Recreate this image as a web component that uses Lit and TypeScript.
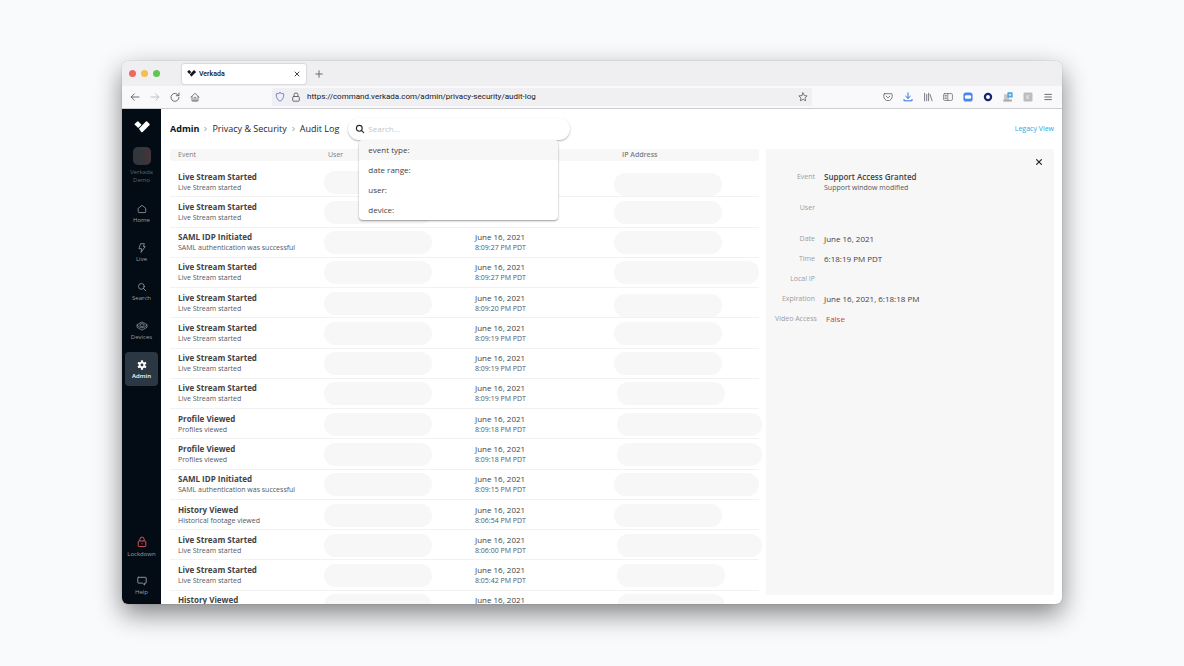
import { LitElement, html, css, svg, nothing } from "lit";
import { customElement, state } from "lit/decorators.js";
import { classMap } from "lit/directives/class-map.js";

interface AuditEvent {
  title: string;
  detail: string;
  time: string;
  wide?: boolean;
  low?: boolean;
  inset?: boolean;
}

const STREAM = { title: "Live Stream Started", detail: "Live Stream started" };
const PROFILE = { title: "Profile Viewed", detail: "Profiles viewed" };
const SAML = { title: "SAML IDP Initiated", detail: "SAML authentication was successful" };
const HISTORY = { title: "History Viewed", detail: "Historical footage viewed" };

const EVENTS: AuditEvent[] = [
  { ...STREAM, time: "8:09:31 PM PDT", low: true },
  { ...STREAM, time: "8:09:28 PM PDT" },
  { ...SAML, time: "8:09:27 PM PDT" },
  { ...STREAM, time: "8:09:27 PM PDT", wide: true },
  { ...STREAM, time: "8:09:20 PM PDT", low: true },
  { ...STREAM, time: "8:09:19 PM PDT" },
  { ...STREAM, time: "8:09:19 PM PDT" },
  { ...STREAM, time: "8:09:19 PM PDT", inset: true },
  { ...PROFILE, time: "8:09:18 PM PDT", wide: true, inset: true },
  { ...PROFILE, time: "8:09:18 PM PDT", wide: true, inset: true },
  { ...SAML, time: "8:09:15 PM PDT", wide: true },
  { ...HISTORY, time: "8:06:54 PM PDT" },
  { ...STREAM, time: "8:06:00 PM PDT", wide: true, inset: true },
  { ...STREAM, time: "8:05:42 PM PDT", inset: true },
  { ...HISTORY, time: "8:05:40 PM PDT", inset: true },
];

const line = (body: unknown, size = 10, width = 1) => html`<svg
  width=${size} height=${size} viewBox="0 0 10 10" fill="none" stroke="currentColor"
  stroke-width=${width} stroke-linecap="round" stroke-linejoin="round" aria-hidden="true">${body}</svg>`;

const icons = {
  back: line(svg`<path d="M9 5H1.2M4.4 1.8L1.2 5l3.2 3.2"/>`, 10, 0.9),
  forward: line(svg`<path d="M1 5h7.8M5.6 1.8L8.8 5 5.6 8.2"/>`, 10, 0.9),
  reload: line(svg`<path d="M8.5 3.4A4 4 0 1 0 9 5.3M9 1v2.7H6.3"/>`, 10, 0.9),
  home: line(svg`<path d="M1 5.2L5 1.2l4 4M2 4.4V9h6V4.4M4 9V6.2a1 1 0 0 1 2 0V9"/>`, 10, 0.8),
  shield: line(svg`<path d="M5 .8c1.2.7 2.5 1 3.8 1C8.8 5.6 7.6 8 5 9.3 2.4 8 1.2 5.6 1.2 1.8c1.3 0 2.6-.3 3.8-1z"/>`, 10, 0.9),
  lock: line(svg`<rect x="1.7" y="4.5" width="6.6" height="4.7" rx=".9"/><path d="M3 4.4V2.900a2 2 0 0 1 4 0v1.500"/>`, 10, 0.9),
  star: line(svg`<path d="M5 .9l1.250 2.650 2.900.350-2.150 2 .6 2.900L5 7.350 2.400 8.800l.6-2.900-2.150-2 2.900-.350z"/>`, 10, 0.8),
  pocket: line(svg`<path d="M1.7 1.7h6.600a.9.9 0 0 1 .9.9v1.800a4.200 4.200 0 0 1-8.400 0V2.600a.9.9 0 0 1 .9-.9z"/><path d="M3.200 4.200L5 5.900l1.800-1.700"/>`, 10, 0.8),
  download: line(svg`<path d="M5 .8v5.400M2.700 4.200L5 6.400l2.300-2.200M1 7.400v1.400h8V7.400"/>`, 10, 1),
  library: line(svg`<path d="M1.600 1.200v7.600M3.700 2.400v6.400M5.600 1.200v7.600M7 2.400l2.100 6.400"/>`, 10, 0.8),
  panes: line(svg`<rect x=".6" y="1.600" width="8.800" height="6.800" rx="1"/><path d="M4.800 1.600v6.800M2 3.500h1.400M2 5h1.400M2 6.500h1.400"/>`, 10, 0.7),
  zoom: html`<svg width="10" height="10" viewBox="0 0 10 10" aria-hidden="true"><rect x=".4" y=".4" width="9.200" height="9.200" rx="2.600" fill="#4a86ee"/><rect x="1.900" y="3.200" width="6.200" height="3.600" rx="1.400" fill="#fff"/></svg>`,
  ring: html`<svg width="10" height="10" viewBox="0 0 10 10" aria-hidden="true"><circle cx="5" cy="5" r="3.100" fill="#fff" stroke="#14256b" stroke-width="2.200"/></svg>`,
  note: html`<svg width="10" height="10" viewBox="0 0 10 10" aria-hidden="true"><path d="M1 2.200h5v7.200H1z" fill="#c6c8cb"/><path d="M.3 7.500h8.700v2H.3z" fill="#a9acb0"/><rect x="4.400" y=".3" width="5.200" height="5.200" rx=".6" fill="#46a0dc"/><path d="M7 1.500v2.800M5.600 2.900h2.800" stroke="#fff" stroke-width=".8"/></svg>`,
  badge: html`<svg width="10" height="10" viewBox="0 0 10 10" aria-hidden="true"><rect x=".5" y=".5" width="9" height="9" rx="1.200" fill="#bcbdbf"/><path d="M4 3v4M6.200 3.200L4.400 5l1.800 2" stroke="#e9e9ea" fill="none"/></svg>`,
  menu: line(svg`<path d="M1.800 2.400h6.600M1.800 5h6.600M1.800 7.600h6.600"/>`, 10, 0.9),
  plus: line(svg`<path d="M5 1.700v6.600M1.700 5h6.600"/>`, 10, 0.9),
  tabClose: line(svg`<path d="M3 3l4 4M7 3L3 7"/>`, 10, 0.8),
  close: line(svg`<path d="M2.600 2.600l4.800 4.800M7.400 2.600L2.600 7.400"/>`, 10, 1.2),
  search: line(svg`<circle cx="4.300" cy="4.300" r="2.900"/><path d="M6.500 6.500L8.700 8.700"/>`, 10, 1.1),
  navHome: line(svg`<path d="M1.300 4.300L5 1.300l3.700 3v3.600a.7.7 0 0 1-.7.7H2a.7.7 0 0 1-.7-.7z"/>`, 10, 0.8),
  bolt: line(svg`<path d="M4 .7h3.400L6.300 3.500h1.900L4 9.400l.7-3.700H2.300z"/>`, 10, 0.8),
  navSearch: line(svg`<circle cx="4.400" cy="4.400" r="2.900"/><path d="M6.500 6.500L8.800 8.800"/>`, 10, 0.8),
  devices: html`<svg width="12" height="10" viewBox="0 0 12 10" fill="none" stroke="currentColor" stroke-width=".7" stroke-linejoin="round" aria-hidden="true"><path d="M1 3.700L6 1l5 2.700v2.600L6 9.200 1 6.300z"/><path d="M1 3.900c1.600 2 3.200 2.900 5 2.900s3.400-.9 5-2.900"/><ellipse cx="6" cy="4.100" rx="2.200" ry="1.400"/></svg>`,
  gear: html`<svg width="10" height="10" viewBox="0 0 10 10" aria-hidden="true"><g fill="currentColor"><circle cx="5" cy="5" r="3.300"/><rect x="3.900" y=".3" width="2.200" height="9.400" rx=".5"/><rect x="3.900" y=".3" width="2.200" height="9.400" rx=".5" transform="rotate(60 5 5)"/><rect x="3.900" y=".3" width="2.200" height="9.400" rx=".5" transform="rotate(120 5 5)"/></g><circle cx="5" cy="5" r="1.400" fill="#2b3743"/></svg>`,
  lockdown: html`<svg width="10" height="12" viewBox="0 0 10 12" fill="none" stroke="#d9505a" stroke-width="1" stroke-linejoin="round" aria-hidden="true"><rect x="1.200" y="5" width="7.600" height="5.600" rx=".8"/><path d="M2.900 5V3.200a2.100 2.100 0 0 1 4.200 0V5M5 7.300v1"/></svg>`,
  help: line(svg`<path d="M1.300 1.300h7.400a.5.5 0 0 1 .5.5v4.800a.5.5 0 0 1-.5.5H7.600v1.900L5.500 7.100H1.300a.5.5 0 0 1-.5-.5V1.800a.5.5 0 0 1 .5-.5z"/>`, 10, 0.9),
};

const logo = (width: number) => html`<svg width=${width} viewBox="0 0 16 12" fill="currentColor" aria-hidden="true">
  <path d="M.3 3.200L3.200.4a.8.8 0 0 1 1.100 0l3.300 3.300L4.200 7.100z"/>
  <path d="M4.900 7.800l7-7.200a.9.9 0 0 1 1.200 0l2.500 2.500a.6.6 0 0 1 0 .8L8.600 11a1 1 0 0 1-1.400 0z"/>
</svg>`;

@customElement("app-root")
export class AppRoot extends LitElement {
  @state() private detailOpen = true;

  static styles = css`
    :host {
      display: flex;
      box-sizing: border-box;
      height: 100vh;
      padding: 61px 122px 62px;
      background: #f8fafc;
      color: #3f4347;
      font-family: "Open Sans", "Noto Sans", sans-serif;
      font-size: 8px;
      line-height: 10px;
    }
    *, *::before, *::after { box-sizing: border-box; }
    button, input { font: inherit; color: inherit; background: none; border: 0; padding: 0; margin: 0; min-width: 0; outline: none; }
    button { cursor: pointer; display: flex; align-items: center; justify-content: center; }
    a { color: inherit; text-decoration: none; }
    svg { display: block; flex: none; }

    .window {
      flex: 1;
      min-width: 0;
      display: flex;
      flex-direction: column;
      border-radius: 6px;
      background: #fff;
      box-shadow: 0 0 1px rgba(0, 0, 0, 0.4), 0 10px 26px rgba(0, 0, 0, 0.48);
    }
    .tabs {
      flex: none;
      display: flex;
      align-items: center;
      height: 25px;
      padding: 0 7px;
      border-radius: 6px 6px 0 0;
      background: #efeff1;
      font-family: Roboto, sans-serif;
      color: #15141a;
    }
    .lights { display: flex; gap: 5px; margin-right: 22px; }
    .light { width: 7px; height: 7px; border-radius: 50%; }
    .red { background: #ec6a5e; }
    .amber { background: #f4bf4f; }
    .green { background: #61c554; }
    .tab {
      display: flex;
      align-items: center;
      gap: 3px;
      width: 124px;
      height: 20px;
      padding: 0 4px 0 5px;
      border-radius: 2px;
      background: #fff;
      box-shadow: 0 0 2px rgba(0, 0, 0, 0.3);
      font-size: 7px;
      font-weight: 500;
    }
    .tab span { flex: 1; }
    .plus { margin-left: 8px; color: #5b5b66; }

    .toolbar {
      flex: none;
      display: flex;
      align-items: center;
      height: 23px;
      padding: 0 9px 0 8px;
      border-bottom: 1px solid #ccccd1;
      background: #f9f9fb;
      color: #5b5b66;
    }
    .tools { display: flex; gap: 10px; }
    .pale { color: #b9b9c0; }
    .blue { color: #2f72dd; }
    .violet { color: #6d78dc; }
    .address {
      flex: 1;
      display: flex;
      align-items: center;
      gap: 6px;
      max-width: 540px;
      height: 18px;
      margin: 0 auto 0 72px;
      padding: 0 4px 0 3px;
      border-radius: 2px;
      background: #f0f0f3;
      font-family: Roboto, sans-serif;
      color: #5b5b66;
    }
    .address input { flex: 1; color: #15141a; }

    .app { flex: 1; min-height: 0; display: flex; }
    .sidebar {
      flex: none;
      display: flex;
      flex-direction: column;
      gap: 5px;
      width: 39px;
      padding: 12px 3px 2px;
      border-radius: 0 0 0 6px;
      background: #030c14;
      color: #9a9fa5;
      font-size: 6px;
      line-height: 8px;
    }
    .org { display: flex; flex-direction: column; align-items: center; height: 70px; color: #fff; }
    .tile { width: 18px; height: 18px; margin: 14px 0 3px; border-radius: 5px; background: linear-gradient(80deg, #33373b 40%, #46343a); }
    .org p { margin: 0; color: #5f656b; text-align: center; }
    .item { flex-direction: column; gap: 2px; height: 34px; padding-top: 1px; border-radius: 4px; }
    .item.active { background: #2b3743; color: #fff; font-weight: 600; }
    .spacer { flex: 1; }

    .main { flex: 1; min-width: 0; display: flex; flex-direction: column; padding: 0 8px 0 9px; }
    .head { flex: none; display: flex; align-items: center; height: 40px; }
    .crumbs { display: flex; align-items: center; gap: 5px; font-size: 9px; color: #24282c; }
    .crumbs b { font-weight: 700; color: #101418; }
    .crumbs svg { color: #9a9fa5; }
    .search {
      position: relative;
      display: flex;
      align-items: center;
      gap: 3px;
      width: 222px;
      height: 22px;
      margin-left: 9px;
      padding: 0 8px 0 7px;
      border-radius: 11px;
      background: #fff;
      box-shadow: 0 1px 2px rgba(0, 0, 0, 0.3);
      color: #24282c;
    }
    .search input { flex: 1; }
    .search input::placeholder { color: #c3c6c9; opacity: 1; }
    .menu {
      position: absolute;
      z-index: 2;
      top: 22px;
      left: 11px;
      width: 199px;
      margin: 0;
      padding: 0;
      list-style: none;
      border-radius: 4px;
      overflow: hidden;
      background: #fff;
      box-shadow: 0 1px 2px rgba(0, 0, 0, 0.4);
    }
    .menu button { justify-content: flex-start; width: 100%; height: 20px; padding-left: 9px; color: #3f4347; }
    .menu li:first-child { background: #f7f7f7; }
    .legacy { margin-left: auto; font-size: 7px; color: #2aa9e0; }

    .content { flex: 1; min-height: 0; display: flex; }
    .list { flex: 1; min-width: 0; padding-right: 7px; overflow: hidden; }
    table { width: 100%; height: calc(100% + 17px); table-layout: fixed; border-spacing: 0; }
    th {
      height: 12px;
      padding: 0 0 0 8px;
      background: #f7f7f7;
      text-align: left;
      font-size: 7px;
      font-weight: 400;
      color: #7b8086;
    }
    th:first-child { border-radius: 3px 0 0 3px; }
    th:last-child { border-radius: 0 3px 3px 0; font-weight: 600; }
    .lead td { height: 6px; padding: 0; border: 0; }
    .c-event { width: 150px; }
    .c-user, .c-date { width: 147px; }
    td { padding: 0 0 0 8px; border-bottom: 1px solid #f2f2f3; white-space: nowrap; }
    td.blank { padding: 1px 0 0 4px; }
    td.ip { padding: 1px 0 0; }
    td.ip.inset { padding-left: 3px; }
    td.ip.low { vertical-align: bottom; }
    strong, small, time { display: block; line-height: 11px; }
    strong { font-weight: 700; }
    small { font-size: 7px; color: #54585c; }
    .pill { width: 108px; height: 23px; border-radius: 12px; background: #f7f7f7; }
    .pill.wide { width: 145px; }

    .panel { flex: none; position: relative; width: 288px; margin-bottom: 9px; padding: 22px 9px; background: #f7f7f7; }
    .shut { position: absolute; top: 8px; right: 10px; color: #24282c; }
    dl { display: grid; grid-template-columns: 40px 1fr; column-gap: 9px; row-gap: 9px; margin: 0; }
    dt { text-align: right; font-size: 7px; line-height: 11px; color: #9a9ea3; white-space: nowrap; }
    dd { margin: 0; line-height: 11px; min-height: 11px; }
    dd strong { font-weight: 600; }
    dd.tall { min-height: 22px; }
    dd.alert { padding-left: 2px; color: #d2383d; }
  `;

  private chevron() {
    return html`<svg width="3" height="6" viewBox="0 0 3 6" fill="none" stroke="currentColor" aria-hidden="true"><path d="M.5 1l2 2-2 2"/></svg>`;
  }

  private item(label: string, icon: unknown, active = false) {
    return html`<button class=${classMap({ item: true, active })}>${icon}<span>${label}</span></button>`;
  }

  private row(e: AuditEvent) {
    return html`<tr>
      <td><strong>${e.title}</strong><small>${e.detail}</small></td>
      <td class="blank"><div class="pill"></div></td>
      <td><time>June 16, 2021</time><small>${e.time}</small></td>
      <td class=${classMap({ ip: true, low: !!e.low, inset: !!e.inset })}>
        <div class=${classMap({ pill: true, wide: !!e.wide })}></div>
      </td>
    </tr>`;
  }

  render() {
    return html`
      <div class="window">
        <div class="tabs">
          <div class="lights"><i class="light red"></i><i class="light amber"></i><i class="light green"></i></div>
          <div class="tab">${logo(9)}<span>Verkada</span><button aria-label="Close tab">${icons.tabClose}</button></div>
          <button class="plus" aria-label="New tab">${icons.plus}</button>
        </div>
        <div class="toolbar">
          <div class="tools">
            <button aria-label="Back">${icons.back}</button>
            <button class="pale" aria-label="Forward">${icons.forward}</button>
            <button aria-label="Reload">${icons.reload}</button>
            <button aria-label="Home page">${icons.home}</button>
          </div>
          <div class="address">
            <span class="violet">${icons.shield}</span>${icons.lock}
            <input aria-label="Address" value="https://command.verkada.com/admin/privacy-security/audit-log" />
            <button aria-label="Bookmark">${icons.star}</button>
          </div>
          <div class="tools">
            <button aria-label="Save to Pocket">${icons.pocket}</button>
            <button class="blue" aria-label="Downloads">${icons.download}</button>
            <button aria-label="Library">${icons.library}</button>
            <button aria-label="Sidebars">${icons.panes}</button>
            <button aria-label="Meetings">${icons.zoom}</button>
            <button aria-label="Sign-in">${icons.ring}</button>
            <button aria-label="Notes">${icons.note}</button>
            <button aria-label="Extension">${icons.badge}</button>
            <button aria-label="Menu">${icons.menu}</button>
          </div>
        </div>
        <div class="app">
          <nav class="sidebar">
            <div class="org">${logo(16)}<div class="tile"></div><p>Verkada<br />Demo</p></div>
            ${this.item("Home", icons.navHome)}
            ${this.item("Live", icons.bolt)}
            ${this.item("Search", icons.navSearch)}
            ${this.item("Devices", icons.devices)}
            ${this.item("Admin", icons.gear, true)}
            <div class="spacer"></div>
            ${this.item("Lockdown", icons.lockdown)}
            ${this.item("Help", icons.help)}
          </nav>
          <main class="main">
            <header class="head">
              <div class="crumbs">
                <b>Admin</b>${this.chevron()}<a href="#privacy">Privacy &amp; Security</a>${this.chevron()}<a href="#log">Audit Log</a>
              </div>
              <div class="search">
                ${icons.search}
                <input type="text" aria-label="Search" placeholder="Search..." />
                <ul class="menu">
                  ${["event type:", "date range:", "user:", "device:"].map((t) => html`<li><button>${t}</button></li>`)}
                </ul>
              </div>
              <a class="legacy" href="#legacy">Legacy View</a>
            </header>
            <div class="content">
              <div class="list">
                <table>
                  <colgroup><col class="c-event" /><col class="c-user" /><col class="c-date" /><col /></colgroup>
                  <thead>
                    <tr><th>Event</th><th>User</th><th></th><th>IP Address</th></tr>
                    <tr class="lead"><td colspan="4"></td></tr>
                  </thead>
                  <tbody>${EVENTS.map((e) => this.row(e))}</tbody>
                </table>
              </div>
              ${this.detailOpen
                ? html`<aside class="panel">
                    <button class="shut" aria-label="Close details" @click=${() => (this.detailOpen = false)}>${icons.close}</button>
                    <dl>
                      <dt>Event</dt><dd><strong>Support Access Granted</strong><small>Support window modified</small></dd>
                      <dt>User</dt><dd class="tall"></dd>
                      <dt>Date</dt><dd>June 16, 2021</dd>
                      <dt>Time</dt><dd>6:18:19 PM PDT</dd>
                      <dt>Local IP</dt><dd></dd>
                      <dt>Expiration</dt><dd>June 16, 2021, 6:18:18 PM</dd>
                      <dt>Video Access</dt><dd class="alert">False</dd>
                    </dl>
                  </aside>`
                : nothing}
            </div>
          </main>
        </div>
      </div>
    `;
  }
}
